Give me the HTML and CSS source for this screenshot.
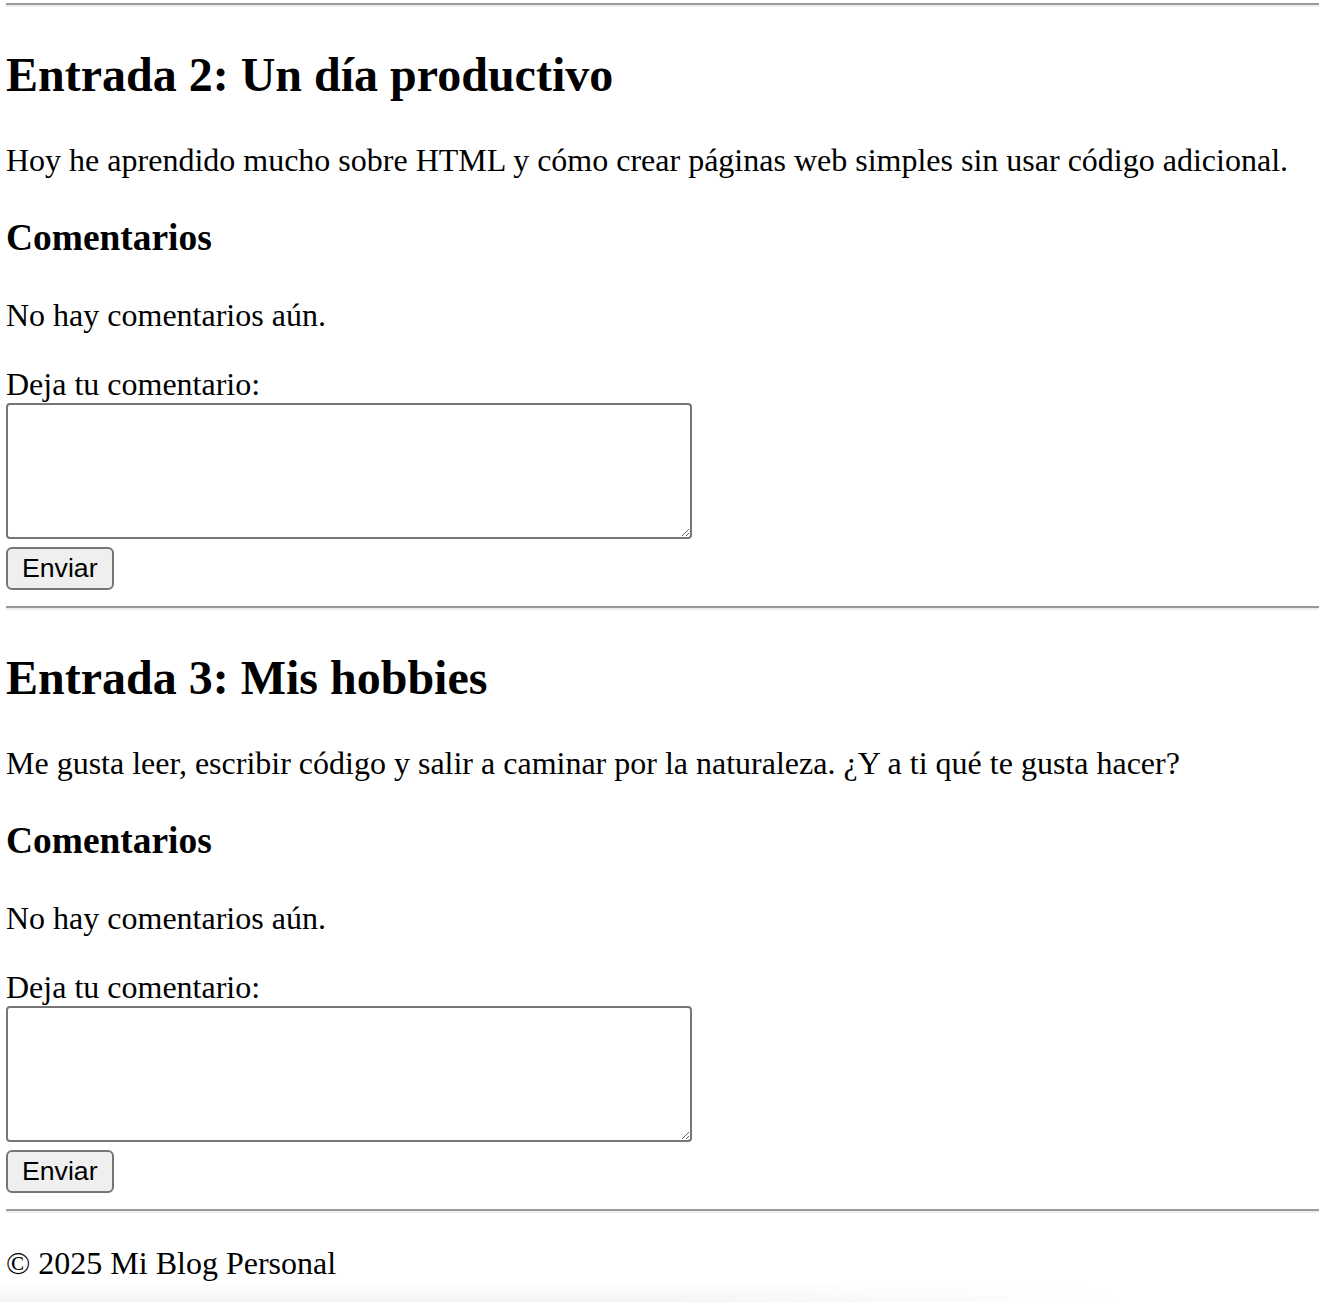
FILE: index.html
```html
<!DOCTYPE html>
<html lang="es">
<head>
<meta charset="utf-8">
<title>Mi Blog Personal</title>
<link rel="stylesheet" href="styles.css">
</head>
<body>
<hr class="rule rule-first">
<section class="entry">
  <h1 class="entry-title">Entrada 2: Un día productivo</h1>
  <p class="text">Hoy he aprendido mucho sobre HTML y cómo crear páginas web simples sin usar código adicional.</p>
  <h3 class="comments-title">Comentarios</h3>
  <p class="text">No hay comentarios aún.</p>
  <form class="comment-form">
    <label class="comment-label" for="c2">Deja tu comentario:</label>
    <textarea class="comment-box" id="c2"></textarea>
    <button class="send" type="button">Enviar</button>
  </form>
</section>
<hr class="rule">
<section class="entry">
  <h1 class="entry-title">Entrada 3: Mis hobbies</h1>
  <p class="text">Me gusta leer, escribir código y salir a caminar por la naturaleza. ¿Y a ti qué te gusta hacer?</p>
  <h3 class="comments-title">Comentarios</h3>
  <p class="text">No hay comentarios aún.</p>
  <form class="comment-form">
    <label class="comment-label" for="c3">Deja tu comentario:</label>
    <textarea class="comment-box" id="c3"></textarea>
    <button class="send" type="button">Enviar</button>
  </form>
</section>
<hr class="rule">
<footer class="footer">
  <p class="text">© 2025 Mi Blog Personal</p>
</footer>
<div class="bottom-fade"></div>
</body>
</html>
```
FILE: styles.css
```css
html, body {
  background: #fff;
}
body {
  margin: 0 11px 0 6px;
  font-family: "Liberation Serif", "Times New Roman", serif;
  font-size: 32px;
  color: #000;
}
.rule {
  height: 0;
  margin: 16px 0;
  border: 0;
  border-top: 2px solid #9a9a9a;
  border-bottom: 2px solid #eeeeee;
}
.rule-first {
  margin-top: 3px;
}
.entry-title {
  font-size: 48px;
  line-height: 55px;
  font-weight: bold;
  margin: 40px 0;
}
.text {
  font-size: 32px;
  line-height: 37px;
  margin: 32px 0;
}
.comments-title {
  font-size: 37.44px;
  line-height: 43px;
  font-weight: bold;
  margin: 37.44px 0;
}
.comment-form {
  display: flex;
  flex-direction: column;
  align-items: flex-start;
  margin: 0;
}
.comment-label {
  display: block;
  line-height: 37px;
}
.comment-box {
  display: block;
  box-sizing: border-box;
  width: 686px;
  height: 136px;
  margin: 0;
  padding: 4px;
  border: 2px solid #767676;
  border-radius: 4px;
  background: #fff;
  font-family: "Liberation Mono", monospace;
  font-size: 26px;
}
.send {
  display: block;
  margin: 8px 0 0;
  padding: 4px 14px;
  border: 2px solid #767676;
  border-radius: 6px;
  background: #efefef;
  color: #000;
  font-family: "Liberation Sans", Arial, sans-serif;
  font-size: 26.67px;
  line-height: 31px;
}
.footer {
  display: block;
}
.bottom-fade {
  position: fixed;
  left: 0;
  bottom: 0;
  width: 1200px;
  height: 22px;
  pointer-events: none;
  background: linear-gradient(to bottom, rgba(0,0,0,0), rgba(0,0,0,0.045));
  -webkit-mask-image: linear-gradient(to right, #000 0%, #000 55%, transparent 95%);
  mask-image: linear-gradient(to right, #000 0%, #000 55%, transparent 95%);
}
```
